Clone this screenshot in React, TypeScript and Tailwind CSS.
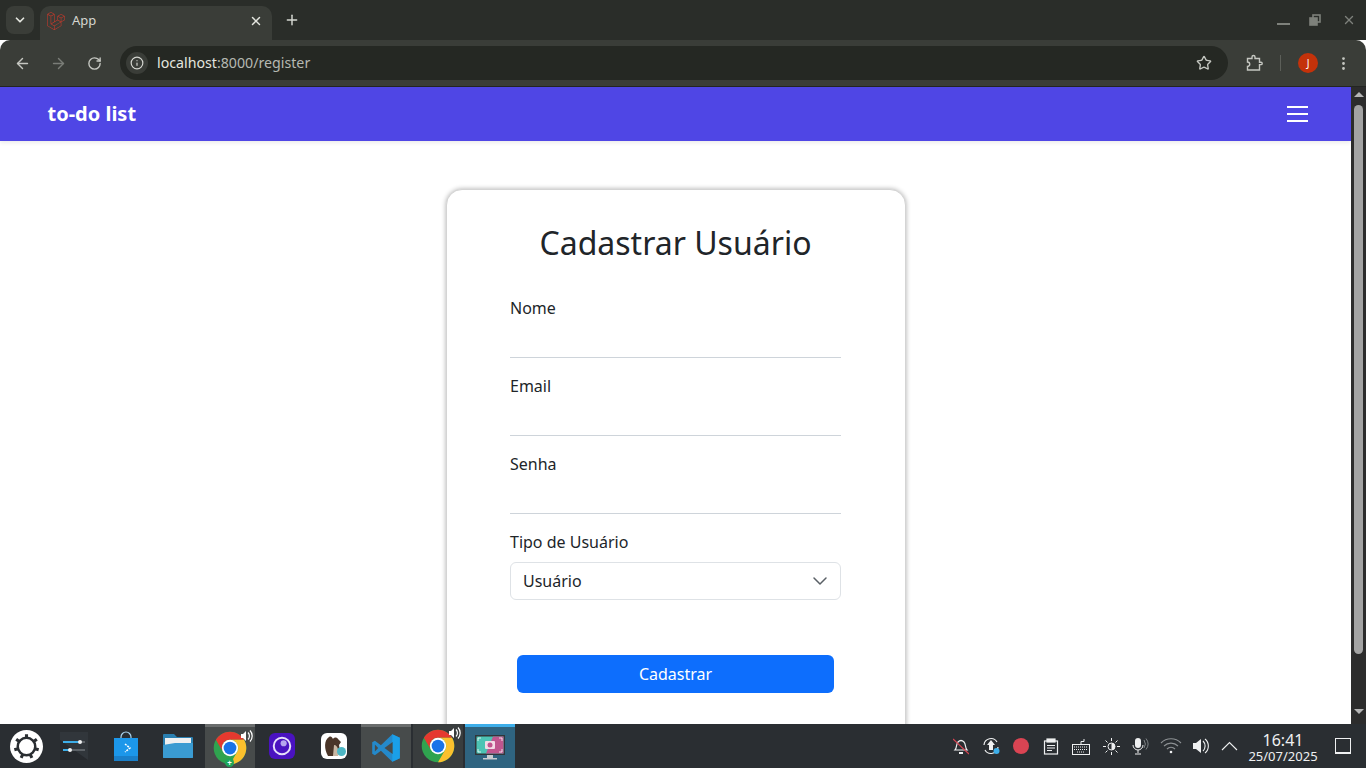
import { ChevronDown, X, Plus, ArrowLeft, ArrowRight, RotateCw, Info, Star, EllipsisVertical } from 'lucide-react'
import { FaLaravel } from 'react-icons/fa'

function ChromeIcon({ size = 34 }: { size?: number }) {
  return (
    <svg width={size} height={size} viewBox="0 0 48 48">
      <circle cx="24" cy="24" r="23" fill="#2fa34f" />
      <path d="M4.1 12.5A23 23 0 0 1 43.9 12.5H24A11.5 11.5 0 0 0 14.04 29.75z" fill="#e5392f" />
      <path d="M43.9 12.5A23 23 0 0 1 24 47L33.96 29.75A11.5 11.5 0 0 0 24 12.5z" fill="#fbc02d" />
      <circle cx="24" cy="24" r="11.5" fill="#fff" />
      <circle cx="24" cy="24" r="9" fill="#1a73e8" />
    </svg>
  )
}

function Speaker() {
  return (
    <svg width="13" height="14" viewBox="0 0 13 14" className="absolute top-[2px] right-[2px]" fill="none">
      <path d="M1 5h2l3-3v10L3 9H1z" fill="#fff" />
      <path d="M8 3.5a5 5 0 0 1 0 7M10 1.5a8 8 0 0 1 0 11" stroke="#fff" strokeWidth="1.2" />
    </svg>
  )
}

function TaskSlot({ children, className = '' }: { children: React.ReactNode; className?: string }) {
  return <div className={`relative w-[50px] mx-px h-full flex items-center justify-center ${className}`}>{children}</div>
}

function Tray({ children }: { children: React.ReactNode }) {
  return <div className="w-[30px] flex items-center justify-center">{children}</div>
}

function Field({ label, type = 'text' }: { label: string; type?: string }) {
  return (
    <div className="mb-4">
      <label className="block text-base leading-6 mb-2 text-[#212529]">{label}</label>
      <input type={type} className="block w-full h-[30px] border-b border-[#ced4da] outline-none bg-transparent" />
    </div>
  )
}

export default function App() {
  return (
    <div className="h-screen flex flex-col overflow-hidden bg-white" style={{ fontFamily: '"Noto Sans", sans-serif' }}>
      {/* tab strip */}
      <div className="h-10 shrink-0 bg-[#2a2d29] flex items-end pl-[6px] relative">
        <div className="w-7 h-7 mb-[6px] rounded-lg bg-[#3a3d38] flex items-center justify-center">
          <ChevronDown size={14} strokeWidth={3} className="text-[#e3e5df]" />
        </div>
        <div className="ml-[6px] w-[232px] h-[34px] rounded-t-[10px] bg-[#3a3d38] flex items-center pl-[7px] pr-[9px] pb-[5px]">
          <FaLaravel size={18} className="text-[#c8392b]" />
          <span className="ml-[7px] text-[13px] text-[#d5d7d1]">App</span>
          <X size={14} strokeWidth={2.5} className="ml-auto text-[#e3e5df]" />
        </div>
        <Plus size={16} strokeWidth={2.2} className="ml-3 mb-3 text-[#d5d7d1]" />
        <div className="ml-auto flex items-center h-full pr-[10px] text-[#7e817b]">
          <svg width="13" height="2" viewBox="0 0 13 2" className="mr-[19px] mt-[8px]">
            <rect width="13" height="2" fill="currentColor" />
          </svg>
          <svg width="12" height="12" viewBox="0 0 12 12" fill="none" stroke="currentColor" strokeWidth="1.6" className="mr-[21px]">
            <rect x="4" y="1" width="7" height="7" />
            <rect x="1" y="4" width="7" height="7" fill="#7e817b" />
          </svg>
          <X size={14} strokeWidth={2.4} />
        </div>
      </div>

      {/* toolbar */}
      <div className="h-[47px] shrink-0 bg-[#3a3d38] border-b border-[#232522] flex items-center pl-[14px] pr-[14px] rounded-tl-[10px] rounded-tr-[10px]">
        <ArrowLeft size={17} className="text-[#c5c7c1]" />
        <ArrowRight size={17} className="ml-[19px] text-[#7a7d77]" />
        <RotateCw size={15} strokeWidth={2.2} className="ml-[20px] text-[#c5c7c1]" />
        <div className="ml-[18px] flex-1 h-[34px] rounded-full bg-[#252823] flex items-center pl-[6px] pr-[16px]">
          <div className="w-[22px] h-[22px] rounded-full bg-[#3a3d38] flex items-center justify-center">
            <Info size={14} className="text-[#d5d7d1]" />
          </div>
          <span className="ml-[9px] text-[14.2px] text-[#e3e5df]">localhost<span className="text-[#b5b8b1]">:8000/register</span></span>
          <Star size={16} className="ml-auto text-[#c5c7c1]" />
        </div>
        <svg width="18" height="18" viewBox="0 0 18 18" fill="none" stroke="#c5c7c1" strokeWidth="1.4" className="ml-[17px]">
          <path d="M2.5 4.5H7V3a1.5 1.5 0 0 1 3 0v1.5h4.5V8.2H16a1.2 1.2 0 0 1 0 2.4h-1.5V16H2.5v-3.5a2.2 2.2 0 0 0 0-4.5z" />
        </svg>
        <div className="ml-[17px] w-px h-4 bg-[#5c5f59]" />
        <div className="ml-[17px] w-5 h-5 rounded-full bg-[#c4320a] flex items-center justify-center text-[10px] text-white">J</div>
        <EllipsisVertical size={17} className="ml-[17px] text-[#c5c7c1]" />
      </div>

      {/* page area */}
      <div className="flex-1 min-h-0 flex">
        <div className="flex-1 min-w-0 overflow-hidden">
          <nav className="h-[54px] bg-[#4f46e5] flex items-center justify-between pl-[47.5px] pr-[43px] shadow-[0_2px_4px_rgba(0,0,0,0.08)]">
            <span className="text-xl font-bold text-white">to-do list</span>
            <div className="flex flex-col gap-[5px]">
              <div className="w-[21px] h-[2px] bg-white" />
              <div className="w-[21px] h-[2px] bg-white" />
              <div className="w-[21px] h-[2px] bg-white" />
            </div>
          </nav>
          <div className="mt-12 mx-auto w-[460px] rounded-2xl border border-[#d4d4d4] shadow-[0_0_5px_rgba(0,0,0,0.32)] px-[63.5px] pt-[34px] pb-16 bg-white">
            <h2 className="text-[32px] leading-[38px] text-center text-[#212529] mb-[34px]">Cadastrar Usuário</h2>
            <form>
              <Field label="Nome" />
              <Field label="Email" type="email" />
              <Field label="Senha" type="password" />
              <label className="block text-base leading-6 mb-2 text-[#212529]">Tipo de Usuário</label>
              <div className="h-[38px] rounded-md border border-[#dee2e6] flex items-center justify-between pl-3 pr-3 text-base text-[#212529]">
                <span>Usuário</span>
                <svg width="16" height="16" viewBox="0 0 16 16" fill="none" stroke="#5a6066" strokeWidth="1.5" strokeLinecap="round" strokeLinejoin="round">
                  <path d="m2 5 6 6 6-6" />
                </svg>
              </div>
              <button type="button" className="block mt-[55px] mx-auto w-[317px] h-[38px] rounded-md bg-[#0d6efd] text-white text-base">Cadastrar</button>
            </form>
          </div>
        </div>

        {/* scrollbar */}
        <div className="w-[15px] shrink-0 bg-[#2c2c2c] flex flex-col items-center pt-[5px]">
          <div className="w-0 h-0 border-x-[5px] border-x-transparent border-b-[5px] border-b-[#b5b5b5]" />
          <div className="mt-[8px] w-[9px] h-[549px] rounded-full bg-[#a3a3a3]" />
          <div className="mt-[55px] w-0 h-0 border-x-[5px] border-x-transparent border-t-[5px] border-t-[#b5b5b5]" />
        </div>
      </div>

      {/* taskbar */}
      <div className="h-11 shrink-0 bg-[#2a2e32] flex items-stretch text-white">
        <div className="w-12 flex items-center justify-center pl-[4px]">
          <svg width="33" height="33" viewBox="0 0 32 32" fill="none">
            <circle cx="16" cy="16" r="16" fill="#fff" />
            <circle cx="16" cy="16" r="8.5" stroke="#2a2e32" strokeWidth="2.4" />
            <path d="M16 7.5V4M23 11.1l3-2.2M24.2 18.2l3.6 1M19.6 23.7l1.6 3.4M12.4 23.7l-1.6 3.4M7.8 18.2l-3.6 1M9 11.1L6 8.9" stroke="#2a2e32" strokeWidth="3" />
          </svg>
        </div>
        <TaskSlot>
          <svg width="28" height="28" viewBox="0 0 28 28">
            <rect width="28" height="28" fill="#31363b" />
            <path d="M0 28V8l28 20z" fill="#26292d" />
            <path d="M3 10h22M3 18h22" stroke="#5d6267" strokeWidth="2" />
            <path d="M3 10h17M3 18h7" stroke="#3daee9" strokeWidth="2" />
            <circle cx="20" cy="10" r="2" fill="#eff0f1" />
            <circle cx="10" cy="18" r="2" fill="#eff0f1" />
          </svg>
        </TaskSlot>
        <TaskSlot>
          <svg width="26" height="30" viewBox="0 0 26 30">
            <path d="M8 9V6a5 5 0 0 1 10 0v3" fill="none" stroke="#a9d4ef" strokeWidth="1.2" />
            <path d="M1 6h24v23H1z" fill="#1c97ea" transform="translate(0 1)" />
            <path d="M1 25h24v5H1z" fill="#1a7fc9" />
            <path d="M12 13l5 4-5 4" fill="none" stroke="#fff" strokeWidth="1.5" strokeDasharray="2 1" />
          </svg>
        </TaskSlot>
        <TaskSlot>
          <svg width="30" height="26" viewBox="0 0 30 26">
            <path d="M0 2a1 1 0 0 1 1-1h10l3 3h15a1 1 0 0 1 1 1v20H0z" fill="#2a7fb0" />
            <path d="M2 5h26v7H2z" fill="#eff0f1" />
            <path d="M0 12l12-2h18v14a1 1 0 0 1-1 1H1a1 1 0 0 1-1-1z" fill="#3a9bd2" />
          </svg>
        </TaskSlot>
        <TaskSlot className="bg-[#474b4b] border-t-[3px] border-[#6a6d6d]">
          <ChromeIcon />
          <Speaker />
          <div className="absolute bottom-[1px] left-[20px] w-[9px] h-[9px] rounded-full bg-[#1fa65a] flex items-center justify-center text-[8px] font-bold leading-none text-white">+</div>
        </TaskSlot>
        <TaskSlot>
          <div className="w-[26px] h-[26px] rounded-md bg-[#4a12c0] flex items-center justify-center">
            <svg width="22" height="22" viewBox="0 0 20 20" fill="none">
              <circle cx="10" cy="10" r="7.5" stroke="#e6defa" strokeWidth="1.8" />
              <circle cx="11.5" cy="7.5" r="2.8" fill="#b6a4ee" />
            </svg>
          </div>
        </TaskSlot>
        <TaskSlot>
          <div className="relative w-[26px] h-[26px] rounded-md bg-white flex items-center justify-center">
            <svg width="22" height="24" viewBox="0 0 22 24">
              <path d="M5 22C1 15 1 6 6 3c2-1 3 0 4 2 1-2 4-2 5 0l3 3-2 3c1 3 0 6-1 11z" fill="#4a3528" />
              <path d="M11 11c2 0 4 2 4 5v6h-5z" fill="#c9b7a3" />
            </svg>
            <div className="absolute right-[1px] bottom-[3px] w-[9px] h-[9px] rounded-full bg-[#4db6c4]" />
          </div>
        </TaskSlot>
        <TaskSlot className="bg-[#474b4b] border-t-[3px] border-[#6a6d6d]">
          <svg width="30" height="30" viewBox="0 0 100 100">
            <path d="M71 4L33 41 13 26 4 31v38l9 5 20-15 38 37 25-12V16z" fill="#2489ca" />
            <path d="M71 4l25 12v68L71 96z" fill="#1a9fe8" />
            <path d="M72 30L45 50l27 20z" fill="#474b4b" />
            <path d="M13 38l11 12-11 12z" fill="#474b4b" />
          </svg>
        </TaskSlot>
        <TaskSlot className="bg-[#393d3e]">
          <ChromeIcon />
          <Speaker />
        </TaskSlot>
        <TaskSlot className="bg-[#2f6480] border-t-[3px] border-[#3daee9]">
          <svg width="32" height="28" viewBox="0 0 32 28">
            <rect x="1" y="1" width="30" height="20" fill="#31363b" />
            <rect x="2.5" y="2.5" width="27" height="17" fill="#4cc4b4" />
            <path d="M19 2.5h10.5v17H12z" fill="#c0568e" />
            <path d="M4 7V4h3M25 4h3v3M4 15v3h3M28 15v3h-3" fill="none" stroke="#fff" strokeWidth="0.8" />
            <rect x="11" y="7" width="10" height="8" rx="1" fill="#f3dbe6" />
            <circle cx="16" cy="11" r="2.5" fill="#c0568e" />
            <path d="M13 21h6v3h-6zM9 24h14v1.5H9z" fill="#c8ccd0" />
          </svg>
        </TaskSlot>

        {/* tray */}
        <div className="ml-auto flex items-stretch">
          <Tray>
            <svg width="16" height="17" viewBox="0 0 16 17" fill="none">
              <path d="M2 12c2-2 1-6 3-8 2-2 4-2 6 0 2 2 1 6 3 8z" stroke="#eff0f1" strokeWidth="1.2" />
              <path d="M6 14h4v2H6z" fill="#eff0f1" />
              <path d="M0 1l16 15" stroke="#da4453" strokeWidth="1.2" />
            </svg>
          </Tray>
          <Tray>
            <svg width="18" height="18" viewBox="0 0 18 18" fill="none">
              <path d="M2 8a7 7 0 0 1 13-3M16 10a7 7 0 0 1-13 3" stroke="#eff0f1" strokeWidth="1.2" />
              <path d="M9 3l4 5h-2v5H7V8H5z" fill="#eff0f1" />
              <circle cx="14.5" cy="14" r="3" fill="#3daee9" />
            </svg>
          </Tray>
          <Tray><div className="w-4 h-4 rounded-full bg-[#da4453]" /></Tray>
          <Tray>
            <svg width="16" height="17" viewBox="0 0 16 17" fill="none" stroke="#eff0f1" strokeWidth="1.2">
              <rect x="1.5" y="3" width="13" height="13" />
              <rect x="4" y="1" width="8" height="3" fill="#eff0f1" />
              <path d="M4 7.5h8M4 10h8M4 12.5h5" />
            </svg>
          </Tray>
          <Tray>
            <svg width="18" height="17" viewBox="0 0 18 17" fill="none" stroke="#eff0f1">
              <rect x="0.5" y="6.5" width="17" height="10" />
              <path d="M9 6V3.5h3V1" />
              <path d="M2 9h14M2 11.5h14M5 14h8" strokeDasharray="1 1" />
            </svg>
          </Tray>
          <Tray>
            <svg width="17" height="17" viewBox="0 0 17 17" fill="none">
              <circle cx="8.5" cy="8.5" r="3.5" stroke="#eff0f1" />
              <path d="M8.5 5a3.5 3.5 0 0 1 0 7z" fill="#eff0f1" />
              <path d="M8.5 0v3M8.5 14v3M0 8.5h3M14 8.5h3M2.5 2.5l2 2M12.5 12.5l2 2M2.5 14.5l2-2M12.5 4.5l2-2" stroke="#eff0f1" />
            </svg>
          </Tray>
          <Tray>
            <svg width="18" height="18" viewBox="0 0 18 18" fill="none">
              <rect x="3" y="1" width="6" height="10" rx="3" fill="#eff0f1" />
              <path d="M1 8a5 5 0 0 0 10 0M6 13v3M3 17h6" stroke="#eff0f1" />
              <path d="M12 3a7 7 0 0 1 0 8M14 1.5a9 9 0 0 1 0 11" stroke="#7f8386" />
            </svg>
          </Tray>
          <Tray>
            <svg width="22" height="16" viewBox="0 0 22 16" fill="none" stroke="#8d9194" strokeWidth="1.1">
              <path d="M1 5a14 14 0 0 1 20 0M4 8a10 10 0 0 1 14 0M7 11a5.5 5.5 0 0 1 8 0" />
              <circle cx="11" cy="14" r="1.3" fill="#eff0f1" stroke="none" />
            </svg>
          </Tray>
          <Tray>
            <svg width="17" height="16" viewBox="0 0 17 16" fill="none">
              <path d="M0 5h3l5-4v14l-5-4H0z" fill="#eff0f1" />
              <path d="M10 3a7 7 0 0 1 0 10M12 1a9 9 0 0 1 0 14" stroke="#eff0f1" strokeWidth="1.1" />
            </svg>
          </Tray>
          <div className="w-[26px] flex items-center justify-center">
            <svg width="17" height="10" viewBox="0 0 17 10" fill="none" stroke="#eff0f1" strokeWidth="1.1">
              <path d="M1 9l7.5-7.5L16 9" />
            </svg>
          </div>
          <div className="w-[70px] ml-[6px] flex flex-col items-center justify-center pt-[2px]">
            <span className="text-[16px] leading-[17px] text-[#eff0f1]">16:41</span>
            <span className="text-[13px] leading-[14px] text-[#eff0f1]">25/07/2025</span>
          </div>
          <div className="w-[48px] flex items-center justify-center pl-[1px]">
            <div className="w-4 h-4 border-[1.5px] border-b-[2.5px] border-[#eff0f1]" />
          </div>
        </div>
      </div>
    </div>
  )
}
